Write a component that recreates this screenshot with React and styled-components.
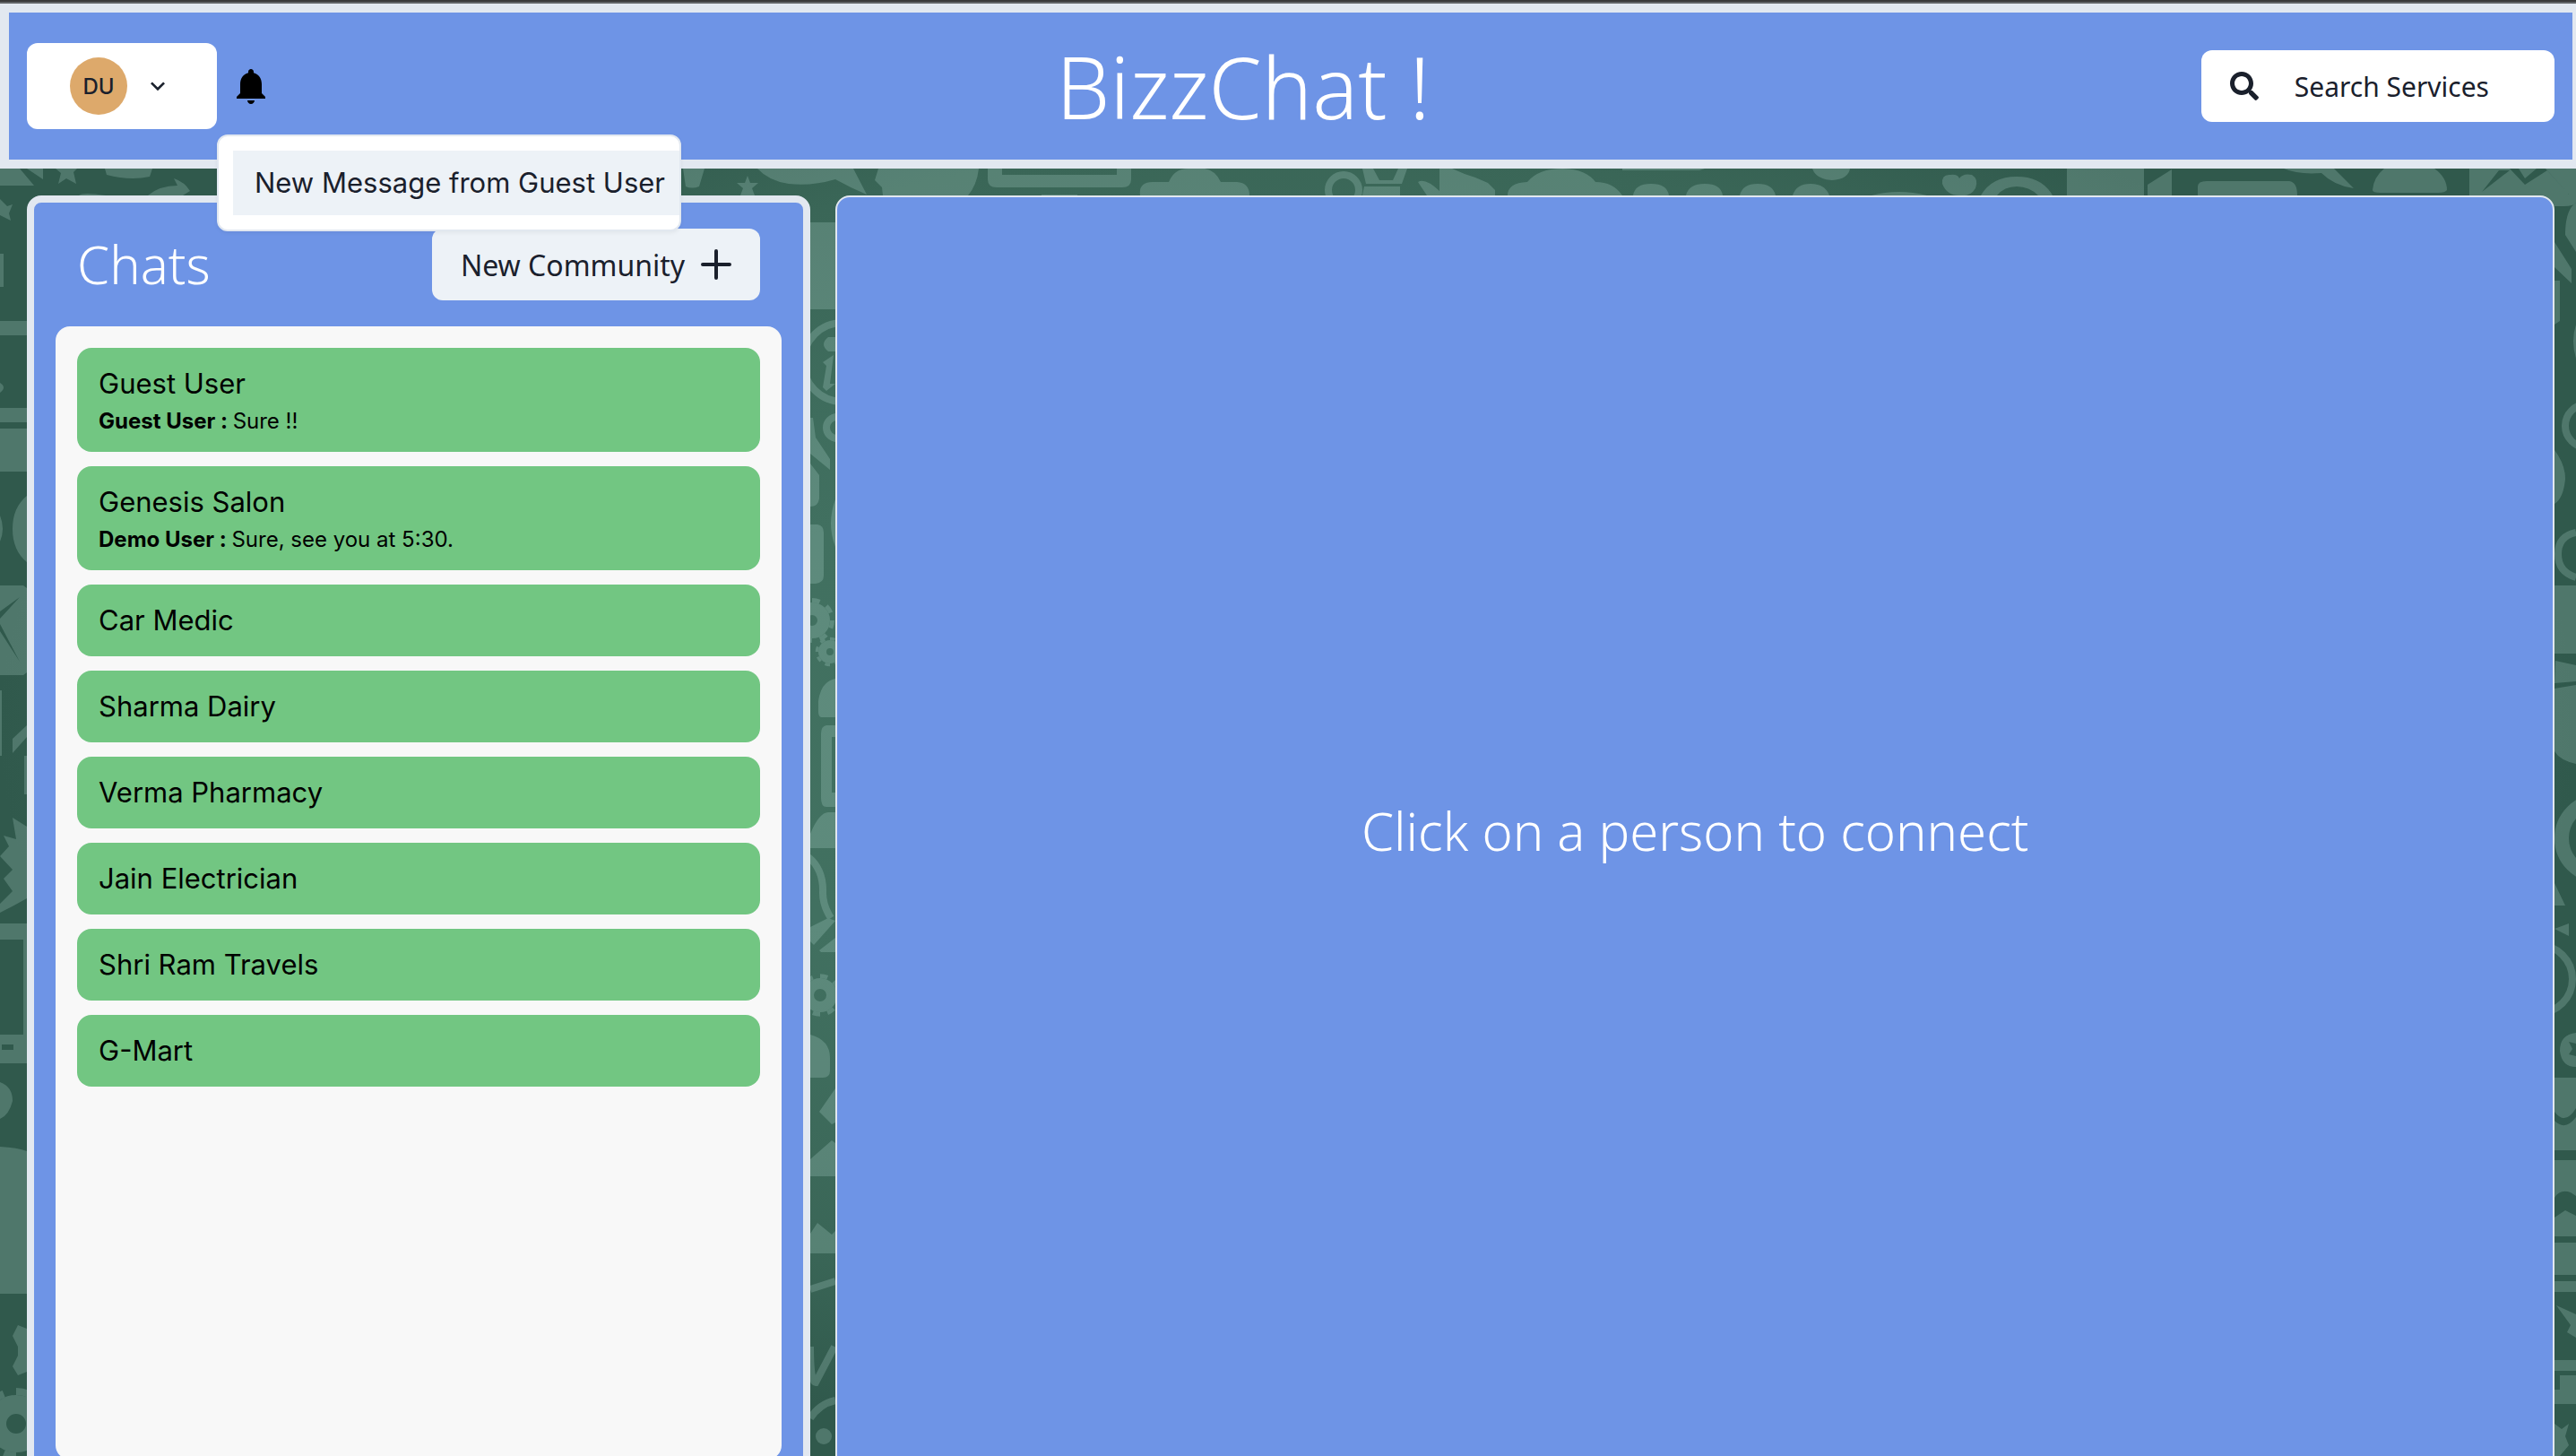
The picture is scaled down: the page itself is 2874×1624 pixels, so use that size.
import React from "react";
import styled, { createGlobalStyle } from "styled-components";
import { FaSearch } from "react-icons/fa";

const display = `"Noto Sans", "Open Sans", sans-serif`;
const text = `Inter, "Liberation Sans", sans-serif`;
const blue = "#6e94e6";
const line = "#e2e8f0";
const ink = "#1a202c";
const chalk = "#dcfffa";

const GlobalStyle = createGlobalStyle`
  *, *::before, *::after { box-sizing: border-box; }
  body { margin: 0; font-family: ${text}; color: ${ink}; }
  button { border: 0; margin: 0; font: inherit; color: inherit; cursor: pointer; }
  h1, h2, p, ul { margin: 0; padding: 0; }
  ul { list-style: none; }
`;

const Page = styled.div`
  position: relative;
  isolation: isolate;
  height: 100vh;
  overflow: hidden;
`;

const Wallpaper = styled.svg`
  position: absolute;
  inset: 0;
  z-index: -1;
  width: 100%;
  height: 100%;
`;

const WindowEdge = styled.div`
  height: 4px;
  background: #606366;
  border-top: 2px solid #3a3a3a;
`;

const TopBar = styled.header`
  display: flex;
  align-items: center;
  justify-content: space-between;
  height: 184px;
  padding: 0 20px;
  background: ${blue};
  border: 10px solid ${line};
  border-right-width: 4px;
`;

const BarGroup = styled.div`
  display: flex;
  align-items: center;
`;

const ProfileButton = styled.button`
  display: flex;
  align-items: center;
  gap: 18px;
  width: 212px;
  height: 96px;
  padding: 0 0 0 48px;
  background: #fff;
  border-radius: 12px;
`;

const Avatar = styled.span`
  display: grid;
  place-items: center;
  width: 64px;
  height: 64px;
  border-radius: 50%;
  background: #dda96b;
  font-size: 24px;
  font-weight: 500;
`;

const Icon = styled.svg`
  display: block;
  width: ${(p) => p.$size}px;
  height: ${(p) => p.$size}px;
`;

const Notifications = styled.div`
  position: relative;
`;

const BellButton = styled.button`
  display: grid;
  place-items: center;
  height: 96px;
  padding: 0 14px;
  background: none;
  color: #000;
`;

const Popover = styled.ul`
  position: absolute;
  top: 102px;
  left: 0;
  z-index: 2;
  padding: 16px 0 16px 16px;
  background: #fff;
  border: 2px solid ${line};
  border-radius: 12px;
  box-shadow: 0 2px 4px rgba(0, 0, 0, 0.05);
`;

const PopoverItem = styled.button`
  display: block;
  padding: 12px 16px 12px 24px;
  background: #edf2f7;
  font-size: 31px;
  line-height: 48px;
  white-space: nowrap;
`;

const Brand = styled.h1`
  color: #fff;
  font-family: ${display};
  font-size: 95px;
  font-weight: 300;
  line-height: 144px;
`;

const ActionButton = styled.button`
  display: flex;
  align-items: center;
  gap: ${(p) => p.$gap}px;
  height: 80px;
  padding: 0 ${(p) => p.$end || 32}px 0 32px;
  border-radius: 12px;
  background: ${(p) => p.$bg};
  font-family: ${display};
  font-size: ${(p) => p.$font}px;
  white-space: nowrap;
`;

const Workspace = styled.main`
  display: grid;
  grid-template-columns: 31% 68%;
  justify-content: space-between;
  height: calc(100vh - 152px);
  padding: 30px 24px 0 30px;
`;

const Sidebar = styled.section`
  display: flex;
  flex-direction: column;
  padding: 0 24px 24px;
  background: ${blue};
  border: 8px solid ${line};
  border-radius: 16px;
`;

const SidebarHead = styled.div`
  display: flex;
  align-items: center;
  justify-content: space-between;
  height: 138px;
  padding: 0 24px;
`;

const Heading = styled.h2`
  color: #fff;
  font-family: ${display};
  font-size: 58px;
  font-weight: 300;
  line-height: 90px;
`;

const ChatList = styled.ul`
  display: flex;
  flex: 1;
  flex-direction: column;
  gap: 16px;
  padding: 24px;
  background: #f8f8f8;
  border-radius: 16px;
`;

const ChatCard = styled.button`
  display: block;
  width: 100%;
  padding: 16px 24px;
  background: #72c682;
  border-radius: 16px;
  color: #000;
  text-align: left;
`;

const ChatName = styled.span`
  display: block;
  font-size: 31px;
  line-height: 48px;
`;

const ChatPreview = styled.span`
  display: block;
  font-size: 24px;
  line-height: 36px;
`;

const Conversation = styled.section`
  display: grid;
  place-items: center;
  padding-bottom: 24px;
  background: ${blue};
  border: 2px solid ${line};
  border-radius: 16px;
`;

const Prompt = styled.p`
  color: #fff;
  font-family: ${display};
  font-size: 58px;
  font-weight: 300;
  line-height: 90px;
`;

const chats = [
  { name: "Guest User", from: "Guest User", message: "Sure !!" },
  { name: "Genesis Salon", from: "Demo User", message: "Sure, see you at 5:30." },
  { name: "Car Medic" },
  { name: "Sharma Dairy" },
  { name: "Verma Pharmacy" },
  { name: "Jain Electrician" },
  { name: "Shri Ram Travels" },
  { name: "G-Mart" },
];

const Gear = ({ x, y, r, hole }) => (
  <g fill="none" stroke={chalk}>
    <circle cx={x} cy={y} r={(r + hole) / 2} strokeWidth={r - hole} />
    <circle
      cx={x}
      cy={y}
      r={r + r / 8}
      strokeWidth={r / 4}
      pathLength="16"
      strokeDasharray="1 1"
    />
  </g>
);

function Doodles() {
  return (
    <Wallpaper viewBox="0 0 2874 1624" preserveAspectRatio="xMidYMid slice" aria-hidden="true">
      <defs>
        <radialGradient id="felt" cx="50%" cy="50%" r="50%">
          <stop offset="0" stopColor="#437360" />
          <stop offset="0.45" stopColor="#417060" />
          <stop offset="0.8" stopColor="#3a6657" />
          <stop offset="1" stopColor="#30594c" />
        </radialGradient>
      </defs>
      <rect width="2874" height="1624" fill="url(#felt)" />
      <g opacity="0.18">
        <g fill={chalk}>
          {/* top band */}
          <path d="M0 188H22L38 207H0zM30 188H48V200zM62 188H86L82 192L85 205L74 199L65 205L68 193zM117 188H170L167 197Q145 202 119 195z" />
          <path d="M165 218Q178 207 198 207L194 199Q206 203 212 213L204 218zM88 218Q92 214 118 218z" />
          <path d="M762 188H786L780 208Q772 211 765 208zM834 196l3 8h9l-7 6 3 8h-16l3-8-7-6h9z" />
          <path d="M845 188H952L967 217Q948 209 932 200Q905 208 880 205Q858 202 845 188zM980 188H1092Q1090 206 1080 218H985L984 209L976 201Z" />
          <path fillRule="evenodd" d="M1102 188H1262V200Q1262 209 1252 209H1112Q1102 209 1102 200zM1118 188V195H1246V188z" />
          <path d="M1162 217H1202V218H1162zM1272 218Q1270 203 1286 203H1304Q1310 188 1326 188H1344Q1356 190 1362 203H1380Q1394 204 1394 218z" />
          <path d="M1520 188H1532L1539 201H1554L1560 188H1570L1564 205H1524zM1522 208H1562V218H1520z" />
          <path d="M1582 203Q1590 198 1606 213V188H1620L1634 194L1646 198L1660 204L1668 212V218H1592z" />
          <path d="M1682 218Q1682 204 1704 203Q1716 188 1744 188Q1770 189 1780 203Q1800 203 1810 218z" />
          <path d="M1810 188H1902L1896 190H1810zM2022 188H2064Q2062 200 2044 201Q2026 200 2022 188z" />
          <path d="M1822 218Q1824 205 1842 205T1862 218zM1881 218Q1884 205 1902 205T1922 218zM1941 218Q1944 205 1961 205T1981 218zM2000 218Q2004 205 2020 205T2041 218zM2088 218Q2118 210 2150 218z" />
          <path d="M2186 199Q2190 193 2200 195Q2208 200 2204 210Q2198 220 2186 218Q2172 218 2167 205Q2166 194 2176 195Q2184 194 2186 199z" />
          <path d="M2210 218Q2222 197 2250 197T2290 218H2274Q2264 208 2250 208T2228 218zM2306 188H2392V218H2306zM2396 206L2423 189V218H2396z" />
          <path d="M2452 218V208Q2452 202 2462 202H2554Q2563 203 2563 218zM2548 188H2604L2626 210Q2604 207 2590 193Q2564 195 2548 188z" />
          <path d="M2660 188H2716Q2730 198 2730 212Q2728 215 2720 215H2656Q2647 215 2647 212Q2648 198 2660 188z" />
          <path fillRule="evenodd" d="M2755 188H2874V226Q2872 230 2860 230H2755zM2769 214L2800 190H2788L2769 214zM2800 188L2817 206L2842 190L2866 217L2840 188H2830L2817 199L2810 188z" />
          {/* left edge */}
          <path d="M0 222L8 230L14 228L10 238L12 246L0 240zM0 283H4V320H0zM0 358H30V374H0zM0 427Q8 432 0 438zM0 455H30V471H0zM0 478H30V526H0zM30 553Q14 566 14 590T30 627zM0 575Q6 590 0 604z" />
          <path fillRule="evenodd" d="M0 653H26L30 656V750L26 753H0zM0 682L22 666L0 690zM0 696L22 738L0 704z" />
          <path d="M0 770H2V843H0zM14 824L30 809V822L14 840zM27 843H30V886H27zM14 912L30 922V1002Q16 1010 0 1018V1008L14 994L4 980L14 970L0 955L10 944L4 932L18 936z" />
          <path fillRule="evenodd" d="M0 1030H30V1186H0zM0 1048V1154H26V1048zM2 1165V1171H15V1165z" />
          <path d="M0 1207Q14 1212 14 1228Q10 1244 0 1248zM0 1279Q20 1280 30 1284V1443H0zM30 1482L20 1478L14 1490L20 1502V1512L14 1524L20 1534L30 1530z" />
          {/* column gap */}
          <path d="M904 248H932V345H904zM932 376H924Q914 384 924 392H932zM918 404L930 396L926 428H932L922 436L918 432L922 408zM904 466H907L910 488L926 512V524L904 506zM904 517L914 530V556Q913 565 904 565z" />
          <path d="M932 557Q922 584 932 610zM904 585H912Q919 586 919 594V642Q919 650 910 651H904zM913 782Q916 760 932 757V800H916Q913 799 913 794z" />
          <path d="M932 809H922Q916 810 916 818V890Q916 900 922 900H932V884H928V822H932zM904 930Q914 906 924 906H932V946H904z" />
          <path d="M904 1034L924 1024L932 1027L908 1054L904 1050zM914 1060L932 1046V1062H916zM904 1154Q926 1160 926 1180V1194Q926 1202 918 1202H904zM932 1214L914 1240L928 1254L932 1252z" />
          <path d="M904 1293L928 1272L932 1275V1312H904zM904 1376L912 1364L928 1377L932 1373V1398H904z" />
          <circle cx="919" cy="1602" r="9" />
          {/* right edge */}
          <path d="M2874 226Q2862 234 2862 262L2874 281zM2850 270L2869 300V316L2850 298zM2850 313H2856V358L2850 362zM2874 362Q2868 380 2874 400zM2850 502Q2862 518 2862 534Q2860 556 2850 562z" />
          <path d="M2850 653H2874V729H2850zM2851 737L2874 742V760L2850 762zM2850 768L2874 764V852Q2856 848 2850 838zM2850 985L2862 1010H2850zM2850 1036L2866 1030V1044z" />
          <path fillRule="evenodd" d="M2874 1152Q2856 1154 2856 1172Q2858 1190 2874 1190zM2866 1162L2874 1164V1178L2866 1176L2870 1170z" />
          <path d="M2850 1202H2874V1236Q2862 1256 2850 1240zM2850 1250Q2862 1262 2874 1246V1283H2850zM2850 1294H2874V1334L2868 1330Q2856 1326 2850 1336zM2850 1358L2862 1350L2874 1356V1379H2850zM2850 1386H2874V1422H2850zM2850 1429H2874V1441H2850z" />
          <path d="M2852 1456L2874 1466V1492L2864 1486L2868 1478zM2850 1517H2874V1529H2850zM2856 1534H2874V1566H2850V1550H2856zM2850 1588L2858 1594L2866 1588L2862 1602L2866 1612L2856 1624H2850z" />
        </g>
        <g fill="none" stroke={chalk} strokeWidth="8">
          <circle cx="1499" cy="212" r="17" />
          <circle cx="940" cy="404" r="44" />
          <circle cx="934" cy="477" r="12" />
          <path d="M902 956Q919 970 918 996Q918 1010 927 1024M904 1438L932 1429M904 1502Q904 1542 910 1542L931 1502M904 1582Q914 1566 932 1562" />
          <circle cx="2886" cy="475" r="24" />
          <path d="M2874 594Q2854 598 2854 618T2874 644" />
          <circle cx="2832" cy="1092" r="38" />
          <circle cx="2900" cy="935" r="42" strokeWidth="16" />
        </g>
        <Gear x={906} y={692} r={20} hole={6} />
        <Gear x={926} y={727} r={13} hole={4} />
        <Gear x={915} y={1110} r={19} hole={7} />
        <Gear x={18} y={1588} r={32} hole={11} />
      </g>
    </Wallpaper>
  );
}

export default function App() {
  return (
    <Page>
      <GlobalStyle />
      <Doodles />
      <WindowEdge />
      <TopBar>
        <BarGroup>
          <ProfileButton type="button" aria-label="DU account menu">
            <Avatar>DU</Avatar>
            <Icon $size={32} viewBox="0 0 24 24" aria-hidden="true">
              <path fill="currentColor" d="M16.59 8.59L12 13.17 7.41 8.59 6 10l6 6 6-6z" />
            </Icon>
          </ProfileButton>
          <Notifications>
            <BellButton type="button" aria-label="Notifications">
              <Icon $size={48} viewBox="0 0 24 24" aria-hidden="true">
                <path
                  fill="currentColor"
                  d="M12 22c1.1 0 2-.9 2-2h-4c0 1.1.9 2 2 2zm6-6v-5c0-3.07-1.64-5.64-4.5-6.32V4c0-.83-.67-1.5-1.5-1.5s-1.5.67-1.5 1.5v.68C7.63 5.36 6 7.92 6 11v5l-2 2v1h16v-1l-2-2z"
                />
              </Icon>
            </BellButton>
            <Popover>
              <li>
                <PopoverItem type="button">New Message from Guest User</PopoverItem>
              </li>
            </Popover>
          </Notifications>
        </BarGroup>
        <Brand>BizzChat !</Brand>
        <ActionButton type="button" $bg="#fff" $gap={40} $end={73} $font={30}>
          <FaSearch size={32} aria-hidden="true" />
          Search Services
        </ActionButton>
      </TopBar>
      <Workspace>
        <Sidebar>
          <SidebarHead>
            <Heading>Chats</Heading>
            <ActionButton type="button" $bg="#edf2f7" $gap={18} $font={32}>
              New Community
              <Icon $size={34} viewBox="0 0 34 34" aria-hidden="true">
                <path d="M17 2V32M2 17H32" stroke="currentColor" strokeWidth="4" strokeLinecap="round" />
              </Icon>
            </ActionButton>
          </SidebarHead>
          <ChatList>
            {chats.map((chat) => (
              <li key={chat.name}>
                <ChatCard type="button">
                  <ChatName>{chat.name}</ChatName>
                  {chat.message && (
                    <ChatPreview>
                      <b>{chat.from} : </b>
                      {chat.message}
                    </ChatPreview>
                  )}
                </ChatCard>
              </li>
            ))}
          </ChatList>
        </Sidebar>
        <Conversation>
          <Prompt>Click on a person to connect</Prompt>
        </Conversation>
      </Workspace>
    </Page>
  );
}
